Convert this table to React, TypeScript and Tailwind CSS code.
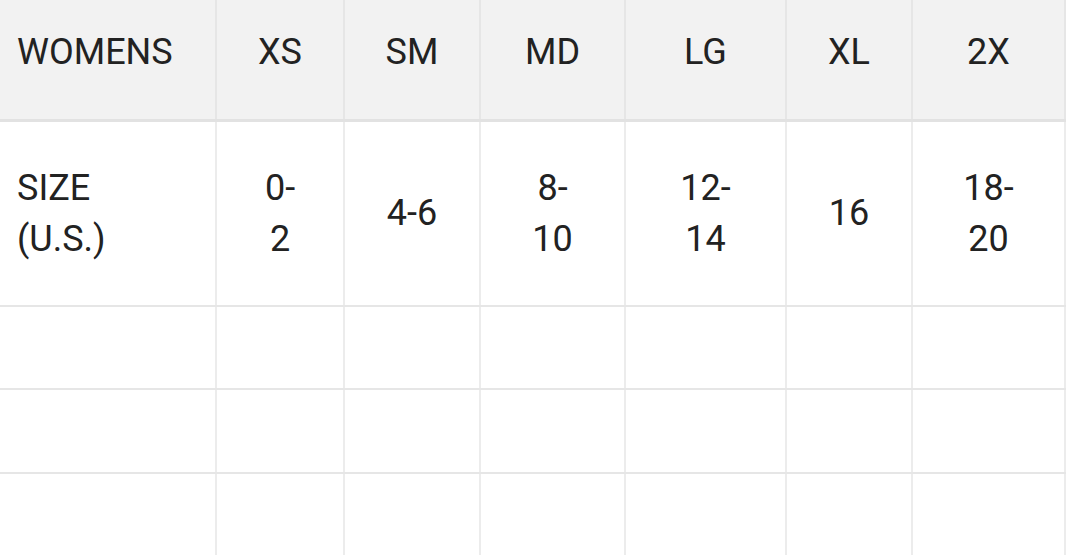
import React from "react";

const widths = [217, 128, 136, 145, 161, 126, 153];
const widthCls = [
  "w-[217px]",
  "w-[128px]",
  "w-[136px]",
  "w-[145px]",
  "w-[161px]",
  "w-[126px]",
  "w-[153px]",
];

const header = ["WOMENS", "XS", "SM", "MD", "LG", "XL", "2X"];
const sizes: React.ReactNode[] = [
  <>SIZE<br />(U.S.)</>,
  <>0-<br />2</>,
  <>4-6</>,
  <>8-<br />10</>,
  <>12-<br />14</>,
  <>16</>,
  <>18-<br />20</>,
];

function Cell({
  i,
  children,
  head,
}: {
  i: number;
  children?: React.ReactNode;
  head?: boolean;
}) {
  return (
    <div
      className={`${widthCls[i]} shrink-0 h-full flex items-center border-r-2 ${
        head ? "border-[#e6e6e6] pb-[15px]" : "border-[#ececec]"
      } ${i === 0 ? "justify-start pl-[17px]" : "justify-center text-center"}`}
    >
      <div>{children}</div>
    </div>
  );
}

export default function App() {
  void widths;
  return (
    <div
      className="w-[1069px] h-[555px] overflow-hidden bg-white text-[#222222] text-[36px] leading-[51px]"
      style={{ fontFamily: "Roboto, 'Noto Sans', sans-serif" }}
    >
      <div className="flex h-[122px] bg-[#f2f2f2] border-b-[3px] border-[#e2e2e2] w-[1066px]">
        {header.map((h, i) => (
          <Cell key={i} i={i} head>
            {h}
          </Cell>
        ))}
      </div>
      <div className="flex h-[185px] border-b-2 border-[#e6e6e6] w-[1066px]">
        {sizes.map((s, i) => (
          <Cell key={i} i={i}>
            {s}
          </Cell>
        ))}
      </div>
      <div className="flex h-[83px] border-b-2 border-[#e6e6e6] w-[1066px]">
        {header.map((_, i) => (
          <Cell key={i} i={i} />
        ))}
      </div>
      <div className="flex h-[84px] border-b-2 border-[#e6e6e6] w-[1066px]">
        {header.map((_, i) => (
          <Cell key={i} i={i} />
        ))}
      </div>
      <div className="flex h-[84px] w-[1066px]">
        {header.map((_, i) => (
          <Cell key={i} i={i} />
        ))}
      </div>
    </div>
  );
}
